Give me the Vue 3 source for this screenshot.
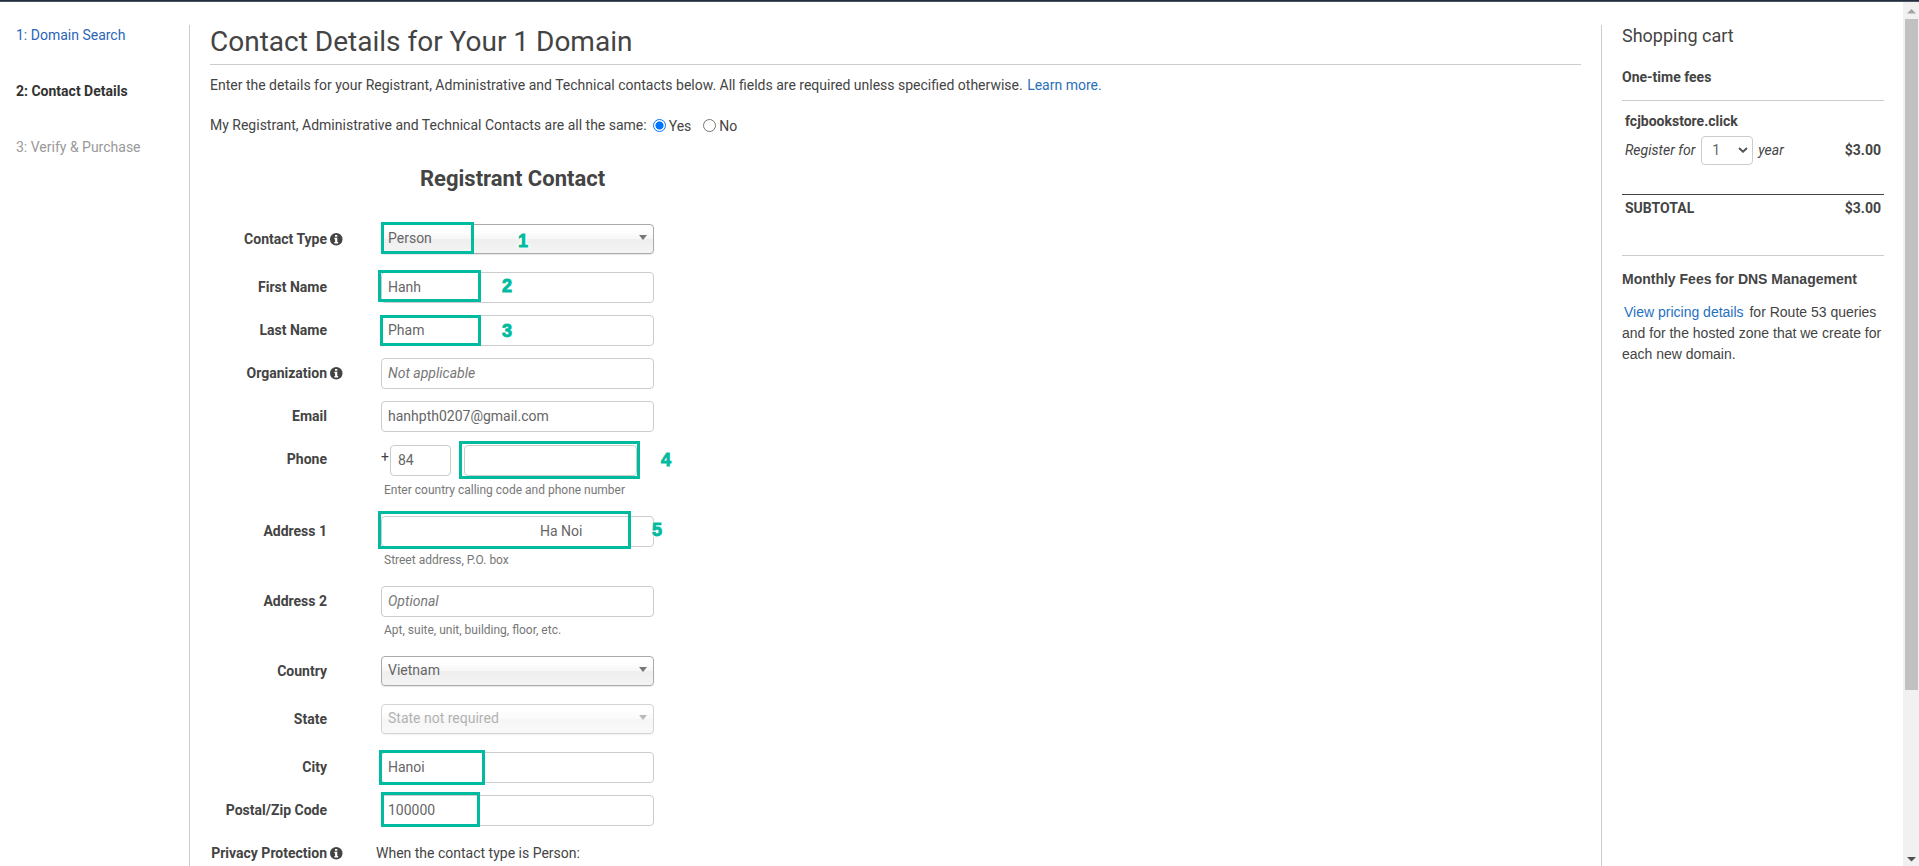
<script setup>
const steps = [
  { text: '1: Domain Search', state: 'link' },
  { text: '2: Contact Details', state: 'current' },
  { text: '3: Verify & Purchase', state: 'future' },
]

// mark: highlight frame [left, top, width, height] relative to the field column
// num: callout number [text, left, top]
const rows = [
  { label: 'Contact Type', info: true, kind: 'select', value: 'Person', h: 48, mark: [0, -2, 93, 32], num: ['1', 137, 8] },
  { label: 'First Name', kind: 'input', value: 'Hanh', h: 43, mark: [-3, -2, 103, 32], num: ['2', 121, 5] },
  { label: 'Last Name', kind: 'input', value: 'Pham', h: 43, mark: [-1, 0, 101, 31], num: ['3', 121, 7] },
  { label: 'Organization', info: true, kind: 'input', placeholder: 'Not applicable', h: 43 },
  { label: 'Email', kind: 'input', value: 'hanhpth0207@gmail.com', h: 43 },
  { label: 'Phone', kind: 'phone', value: '84', hint: 'Enter country calling code and phone number', h: 72, mark: [78, -3, 181, 38], num: ['4', 280, 7] },
  { label: 'Address 1', kind: 'input', value: 'Ha Noi', inset: true, hint: 'Street address, P.O. box', h: 70, mark: [-3, -5, 253, 38], num: ['5', 271, 5] },
  { label: 'Address 2', kind: 'input', placeholder: 'Optional', hint: 'Apt, suite, unit, building, floor, etc.', h: 70 },
  { label: 'Country', kind: 'select', value: 'Vietnam', h: 48 },
  { label: 'State', kind: 'select', value: 'State not required', disabled: true, h: 48 },
  { label: 'City', kind: 'input', value: 'Hanoi', h: 43, mark: [-2, -2, 106, 35] },
  { label: 'Postal/Zip Code', kind: 'input', value: '100000', h: 43, mark: [0, -3, 99, 35] },
  { label: 'Privacy Protection', info: true, kind: 'note', value: 'When the contact type is Person:', h: 43 },
]

const box = (m) => ({ left: m[0] + 'px', top: m[1] + 'px', width: m[2] + 'px', height: m[3] + 'px' })
</script>

<template>
  <div class="page">
    <div class="topbar"></div>
    <div class="body">
      <nav class="steps">
        <a v-for="s in steps" :key="s.text" :class="s.state"><span>{{ s.text }}</span></a>
      </nav>

      <main class="main">
        <h1><span>Contact Details for Your 1 Domain</span></h1>
        <p class="intro">Enter the details for your Registrant, Administrative and Technical contacts below. All fields are required unless specified otherwise. <a>Learn more.</a></p>
        <div class="same">
          <span>My Registrant, Administrative and Technical Contacts are all the same:</span>
          <i class="radio on"></i><span class="opt">Yes</span>
          <i class="radio second"></i><span class="opt">No</span>
        </div>
        <h2><span>Registrant Contact</span></h2>

        <div v-for="r in rows" :key="r.label" class="row" :style="{ height: r.h + 'px' }">
          <div class="label"><span>{{ r.label }}</span></div>
          <div class="info">
            <svg v-if="r.info" width="12.500" height="12.500" viewBox="0 0 12 12">
              <circle cx="6" cy="6" r="6" fill="#444" />
              <path d="M4.800 1.800h2.200v1.700H4.800zM4.200 4.600H7v4h.800v1.400H4.200V8.600H4.900V5.900H4.200z" fill="#fff" />
            </svg>
          </div>
          <div class="field">
            <div v-if="r.kind === 'select'" class="select" :class="{ disabled: r.disabled }">
              <span>{{ r.value }}</span><i class="caret"></i>
            </div>
            <div v-else-if="r.kind === 'phone'" class="phone">
              <span class="plus">+</span>
              <div class="input code"><span>{{ r.value }}</span></div>
              <div class="input number"></div>
            </div>
            <div v-else-if="r.kind === 'input'" class="input" :class="{ inset: r.inset }">
              <span v-if="r.value">{{ r.value }}</span>
              <em v-else>{{ r.placeholder }}</em>
            </div>
            <div v-else class="note"><span>{{ r.value }}</span></div>
            <div v-if="r.hint" class="hint"><span>{{ r.hint }}</span></div>
            <div v-if="r.mark" class="mark" :style="box(r.mark)"></div>
            <b v-if="r.num" class="num" :style="{ left: r.num[1] + 'px', top: r.num[2] + 'px' }">{{ r.num[0] }}</b>
          </div>
        </div>
      </main>

      <aside class="cart">
        <h3><span>Shopping cart</span></h3>
        <h4 class="fees"><span>One-time fees</span></h4>
        <div class="domain"><span>fcjbookstore.click</span></div>
        <div class="register">
          <em>Register for</em>
          <div class="years"><span>1</span>
            <svg width="10" height="6" viewBox="0 0 10 6"><path d="M1 1l4 3.700L9 1" fill="none" stroke="#555" stroke-width="2" /></svg>
          </div>
          <em>year</em>
          <strong>$3.00</strong>
        </div>
        <div class="subtotal"><strong>SUBTOTAL</strong><strong>$3.00</strong></div>
        <h4 class="monthly"><span>Monthly Fees for DNS Management</span></h4>
        <p class="pricing"><a>View pricing details</a> for Route 53 queries and for the hosted zone that we create for each new domain.</p>
      </aside>

      <div class="scroll">
        <svg class="arrow" width="9" height="5" viewBox="0 0 9 5"><path d="M4.500 0L9 4.500H0z" fill="#a3a3a3" /></svg>
        <div class="thumb"></div>
        <svg class="arrow down" width="9" height="5" viewBox="0 0 9 5"><path d="M0 0h9L4.500 4.500z" fill="#505050" /></svg>
      </div>
    </div>
  </div>
</template>

<style>
body { overflow: hidden; background: #fff; }
</style>

<style scoped>
* { box-sizing: border-box; }
.page { height: 866px; overflow: hidden; display: flex; flex-direction: column; background: #fff; color: #444; font: 14px/20px Roboto, "Liberation Sans", sans-serif; }
.topbar { height: 2px; flex: none; background: #232f3e; border-bottom: 1px solid #4a5261; }
.body { flex: 1; min-height: 0; display: flex; }
h1, h2, h3, h4, p { margin: 0; }
a { color: #2a65b8; }

.steps { width: 189px; flex: none; padding: 23px 0 0 16px; display: flex; flex-direction: column; gap: 36px; white-space: nowrap; }
.steps .current { color: #333; font-weight: 700; }
.steps .future { color: #999; }

.main { width: 1392px; flex: none; margin-top: 23px; padding-left: 20px; border-left: 1px solid #ccc; }
h1 { height: 40px; padding-top: 1px; border-bottom: 1px solid #ccc; font-size: 28px; line-height: 32px; font-weight: 400; }
.intro { margin-top: 10px; line-height: 20px; white-space: nowrap; }
.intro a { margin-left: 1px; color: #2a70b8; }
.same { height: 20px; margin-top: 20px; display: flex; white-space: nowrap; }
.radio { width: 13px; height: 13px; margin: 4px 3px 0 6px; border: 1px solid #767676; border-radius: 50%; flex: none; }
.radio.on { border-color: #0075ff; background: radial-gradient(circle, #0075ff 0 3.800px, #fff 4.300px); }
.radio.second { margin-left: 12px; }
.opt { position: relative; top: 1px; }
h2 { margin: 30px 0 0 210px; height: 59px; line-height: 28px; font-size: 22px; font-weight: 700; }
h2 span { white-space: nowrap; }

.row { display: flex; }
.label { width: 117px; padding-top: 5px; text-align: right; font-weight: 700; white-space: nowrap; display: flex; justify-content: flex-end; }
.info { width: 54px; padding: 9px 0 0 3px; flex: none; }
.info svg { display: block; }
.field { position: relative; width: 273px; flex: none; white-space: nowrap; color: #666; }
.input { height: 31px; padding: 5px 6px; border: 1px solid #ccc; border-radius: 4px; background: #fff; line-height: 19px; }
.input em { color: #777; }
.input.inset { padding-left: 158px; }
.select { height: 30px; padding: 3px 6px; border: 1px solid #aaa; border-radius: 4px; display: flex; justify-content: space-between; background: linear-gradient(#fff 20%, #f6f6f6 50%, #eee 52%, #f4f4f4 100%); box-shadow: 0 1px 1px rgba(0,0,0,.1); }
.select.disabled { opacity: .5; }
.caret { margin-top: 7px; width: 0; height: 0; border: 4.500px solid transparent; border-top: 5px solid #777; border-bottom: 0; }
.phone { display: flex; padding-top: 1px; }
.plus { width: 9px; color: #444; line-height: 25px; }
.code { width: 61px; padding-left: 7px; }
.number { width: 173px; margin-left: 13px; }
.hint { padding: 3px 0 0 3px; font-size: 12px; line-height: 20px; color: #777; }
.phone + .hint { padding-top: 4px; }
.note { margin-left: -5px; padding-top: 5px; color: #444; }
.mark { position: absolute; border: 3px solid #00bba0; }
.num { position: absolute; font: 700 18px/18px "Liberation Sans", sans-serif; color: #00bba0; -webkit-text-stroke: 0.900px #00bba0; text-shadow: 0 0 2px #fff, 2px 1px 1px #fff, -2px -1px 1px #fff, 2px -1px 1px #fff, -2px 1px 1px #fff; }

.cart { width: 283px; flex: none; margin: 23px 0 0 20px; padding-left: 20px; border-left: 1px solid #ccc; }
h3 { font-size: 18px; line-height: 22px; font-weight: 400; }
h4 { font: 700 14px/20px Roboto, "Liberation Sans", sans-serif; white-space: nowrap; }
.fees { margin-top: 20px; height: 34px; border-bottom: 1px solid #ccc; }
.domain { margin-top: 10px; padding-left: 3px; font-weight: 700; }
.register { display: flex; align-items: center; height: 30px; margin-top: 4px; padding: 0 3px; white-space: nowrap; }
.years { width: 52px; height: 29px; margin: 0 5px 0 6px; padding: 0 4px 0 10px; border: 1px solid #ccc; border-radius: 4px; display: flex; align-items: center; justify-content: space-between; color: #666; }
.register strong { margin-left: auto; }
.subtotal { display: flex; justify-content: space-between; height: 61px; margin-top: 29px; padding: 3px 3px 0; border-top: 1px solid #444; }
.monthly { padding-top: 13px; border-top: 1px solid #ccc; font-family: "Liberation Sans", sans-serif; }
.pricing { margin-top: 13px; font: 14px/21px "Liberation Sans", sans-serif; }
.pricing a { margin: 0 2px; color: #1f70c0; }

.scroll { width: 16px; margin-left: auto; flex: none; background: #f1f1f1; display: flex; flex-direction: column; align-items: center; padding: 7px 0 4px; }
.arrow { flex: none; }
.thumb { width: 13px; height: 671px; margin-top: 5px; background: #c1c1c1; }
.down { margin-top: auto; }
</style>
